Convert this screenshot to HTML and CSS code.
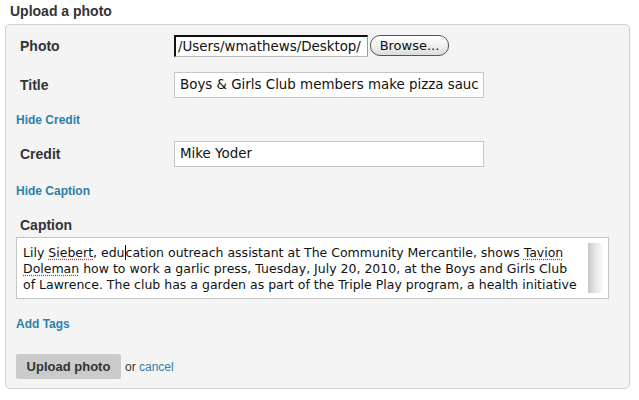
FILE: index.html
```html
<!DOCTYPE html>
<html lang="en">

<head>
    <meta charset="UTF-8">
    <meta name="viewport" content="width=device-width, initial-scale=1.0">
    <title>Upload a photo</title>
    <link rel="stylesheet" href="styles.css">
</head>

<body>
    <h2 class="page-title">Upload a photo</h2>
    <form class="upload-panel">
        <div class="field-row row-photo">
            <label class="field-label">Photo</label>
            <div class="file-path">/Users/wmathews/Desktop/</div>
            <span class="browse-btn">Browse...</span>
        </div>
        <div class="field-row row-title">
            <label class="field-label">Title</label>
            <div class="text-field">Boys &amp; Girls Club members make pizza sauc</div>
        </div>
        <a class="toggle-link link-credit" href="#">Hide Credit</a>
        <div class="field-row row-credit">
            <label class="field-label">Credit</label>
            <div class="text-field">Mike Yoder</div>
        </div>
        <a class="toggle-link link-caption" href="#">Hide Caption</a>
        <label class="field-label caption-label">Caption</label>
        <div class="caption-box">
            <div class="caption-text">
                <div class="line">Lily <span class="misspelt">Siebert</span>, edu<span class="caret"></span>cation outreach assistant at The Community Mercantile, shows <span class="misspelt">Tavion</span></div>
                <div class="line"><span class="misspelt">Doleman</span> how to work a garlic press, Tuesday, July 20, 2010, at the Boys and Girls Club</div>
                <div class="line">of Lawrence. The club has a garden as part of the Triple Play program, a health initiative</div>
            </div>
            <div class="scrollbar"></div>
        </div>
        <a class="toggle-link link-tags" href="#">Add Tags</a>
        <div class="actions">
            <span class="submit-btn">Upload photo</span>
            <span class="or-text">or <a href="#">cancel</a></span>
        </div>
    </form>
</body>

</html>
```

FILE: styles.css
```css
body {
    font-family: "Liberation Sans", Arial, sans-serif;
    margin: 0;
    padding: 0;
    color: #333;
    background: #fff;
}

.page-title {
    font-size: 14px;
    font-weight: bold;
    margin: 0;
    padding: 3px 0 0 10px;
    height: 18px;
    line-height: 16px;
}

.upload-panel {
    margin: 3px 9px 0 5px;
    height: 363px;
    background: #f4f4f4;
    border: 1px solid #cfcfcf;
    border-radius: 5px;
    padding: 0 10px;
    box-sizing: content-box;
}

.field-row {
    display: flex;
    align-items: center;
}

.field-label {
    display: block;
    width: 154px;
    margin-left: 4px;
    font-size: 14px;
    font-weight: bold;
    color: #333;
}

.row-photo {
    padding-top: 9px;
    height: 23px;
}

.file-path {
    width: 189px;
    height: 19px;
    background: #fff;
    border-top: 2px solid #111;
    border-left: 2px solid #111;
    border-right: 1px solid #999;
    border-bottom: 1px solid #bbb;
    font-family: "DejaVu Sans", sans-serif;
    font-size: 13.4px;
    line-height: 19px;
    padding-left: 2px;
    white-space: nowrap;
    overflow: hidden;
    color: #111;
}

.browse-btn {
    margin-left: 2px;
    width: 77px;
    height: 19px;
    border: 1px solid #555;
    border-radius: 10px;
    background: linear-gradient(#fff, #f0f0f0 50%, #dcdcdc);
    font-family: "DejaVu Sans", sans-serif;
    font-size: 13px;
    line-height: 19px;
    text-align: center;
    color: #111;
}

.row-title {
    margin-top: 15px;
}

.row-credit {
    margin-top: 13px;
}

.text-field {
    width: 303px;
    height: 24px;
    background: #fff;
    border: 1px solid #c6c6c6;
    padding-left: 5px;
    font-family: "DejaVu Sans", sans-serif;
    font-size: 13.4px;
    line-height: 24px;
    color: #111;
    white-space: nowrap;
    overflow: hidden;
}

.toggle-link {
    display: block;
    width: max-content;
    font-size: 12px;
    font-weight: bold;
    color: #2f80a7;
    text-decoration: none;
}

.link-credit {
    margin-top: 15px;
    height: 15px;
}

.link-caption {
    margin-top: 17px;
    height: 15px;
}

.caption-label {
    margin-top: 18px;
    height: 17px;
}

.caption-box {
    position: relative;
    margin-top: 3px;
    width: 591px;
    height: 60px;
    background: #fff;
    border: 1px solid #c6c6c6;
    overflow: hidden;
}

.caption-text {
    padding: 7px 0 0 6px;
    font-family: "DejaVu Sans", sans-serif;
    font-size: 12.5px;
    line-height: 16px;
    color: #111;
    white-space: nowrap;
}

.misspelt {
    text-decoration: underline dotted #d22;
    text-underline-offset: 2px;
}

.caret {
    display: inline-block;
    width: 1px;
    height: 15px;
    background: #000;
    vertical-align: -3px;
}

/* fake scrollbar track sitting over the text area's right side */
.scrollbar {
    position: absolute;
    top: 5px;
    right: 5px;
    width: 15px;
    height: 50px;
    background: linear-gradient(to right, #c8c8c8, #e8e8e8 50%, #fbfbfb);
}

.link-tags {
    margin-top: 18px;
    height: 15px;
}

.actions {
    display: flex;
    align-items: center;
    margin-top: 22px;
}

.submit-btn {
    width: 105px;
    height: 25px;
    line-height: 25px;
    text-align: center;
    background: #cbcbcb;
    border-radius: 2px;
    font-size: 13px;
    font-weight: bold;
    color: #333;
}

.or-text {
    margin-left: 4px;
    font-size: 12px;
    color: #333;
}

.or-text a {
    color: #2f80a7;
    text-decoration: none;
}
```
